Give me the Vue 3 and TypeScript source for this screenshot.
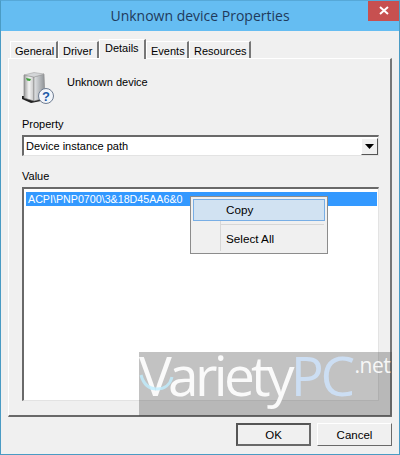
<template>
    <div class="dialog">
        <div class="title-bar">
            <span class="title">Unknown device Properties</span>
            <div class="close-btn">
                <svg width="10" height="9" viewBox="0 0 10 9">
                    <path d="M1 1 L9 8 M9 1 L1 8" stroke="#fff" stroke-width="2" fill="none" />
                </svg>
            </div>
        </div>
        <div class="content">
            <div class="tabs">
                <div
                    v-for="tab in tabs"
                    :key="tab.name"
                    class="tab"
                    :class="{ active: tab.name === activeTab }"
                    :style="{ width: tab.width + 'px' }"
                >
                    {{ tab.name }}
                </div>
            </div>
            <div class="panel">
                <div class="device-row">
                    <svg class="device-icon" width="33" height="32" viewBox="0 0 33 32">
                        <defs>
                            <linearGradient id="front" x1="0" x2="1" y1="0" y2="0">
                                <stop offset="0" stop-color="#9a9a9a" />
                                <stop offset="0.5" stop-color="#f4f4f4" />
                                <stop offset="1" stop-color="#c4c4c4" />
                            </linearGradient>
                            <linearGradient id="side" x1="0" x2="1" y1="0" y2="0">
                                <stop offset="0" stop-color="#e2e4e6" />
                                <stop offset="1" stop-color="#8c9094" />
                            </linearGradient>
                        </defs>
                        <path d="M0 27 L9 31 L24 28 L24 24 L0 24 Z" fill="#222" />
                        <path d="M2 3 L12 5 L12 29 L2 26 Z" fill="url(#front)" stroke="#777" stroke-width="0.6" />
                        <path d="M12 5 L22 2 L23 26 L12 29 Z" fill="url(#side)" stroke="#888" stroke-width="0.6" />
                        <path d="M2 3 L12 0.5 L22 2 L12 5 Z" fill="#d4d6d8" stroke="#999" stroke-width="0.5" />
                        <path d="M4 6 L9 7 L8 9 L5 8.5 Z" fill="#3fa03c" />
                        <circle cx="24" cy="24" r="7.5" fill="#f2f5fa" stroke="#6f7d92" />
                        <text x="24" y="28.5" class="help-mark">?</text>
                    </svg>
                    <span class="device-name">Unknown device</span>
                </div>

                <div class="field-label">Property</div>
                <div class="combo">
                    <span class="combo-text">Device instance path</span>
                    <div class="combo-btn">
                        <svg width="9" height="5" viewBox="0 0 9 5"><path d="M0 0 H9 L4.5 5 Z" fill="#000" /></svg>
                    </div>
                </div>

                <div class="field-label">Value</div>
                <div class="listbox">
                    <div class="list-row">ACPI\PNP0700\3&amp;18D45AA6&amp;0</div>
                </div>

                <div class="context-menu">
                    <div class="menu-gutter"></div>
                    <div class="menu-item highlighted">Copy</div>
                    <div class="menu-sep"></div>
                    <div class="menu-item">Select All</div>
                </div>
            </div>
            <div class="footer">
                <button class="btn default">OK</button>
                <button class="btn">Cancel</button>
            </div>
        </div>

        <div class="watermark">
            <svg class="wm-swoosh" width="36" height="24" viewBox="0 0 36 24">
                <path d="M2 3 C5 14 12 17 18 17 C25 17 31 13 33 5" stroke="#bfeeff" stroke-width="3" fill="none" opacity="0.8" />
            </svg>
            <span class="wm-variety">Variety</span><span class="wm-pc">PC</span><span class="wm-net">.net</span>
        </div>
    </div>
</template>

<script setup lang="ts">
const tabs = [
    { name: "General", width: 48 },
    { name: "Driver", width: 41 },
    { name: "Details", width: 47 },
    { name: "Events", width: 43 },
    { name: "Resources", width: 62 },
];
const activeTab = "Details";
</script>

<style>
html,
body {
    margin: 0;
    background: #f0f0f0;
}
</style>

<style scoped>
.dialog {
    position: relative;
    width: 400px;
    height: 455px;
    box-sizing: border-box;
    border: 1px solid #4a9bc4;
    border-top-color: #56a8d8;
    background: #f0f0f0;
    font-family: "Liberation Sans", Arial, sans-serif;
    font-size: 11px;
    color: #000;
    overflow: hidden;
}

.title-bar {
    position: relative;
    height: 30px;
    background: #65bdf2;
    display: flex;
    align-items: center;
    justify-content: center;
    padding-bottom: 1px;
    box-sizing: border-box;
}

.title {
    font-family: "Open Sans", "Noto Sans", sans-serif;
    font-size: 14px;
    color: #1f3a5c;
}

.close-btn {
    position: absolute;
    top: -1px;
    right: 0;
    width: 31px;
    height: 21px;
    background: #c75050;
    display: flex;
    align-items: center;
    justify-content: center;
}

.content {
    padding: 8px 7px 0;
}

.tabs {
    display: flex;
    height: 19px;
    padding-left: 2px;
    align-items: flex-end;
    position: relative;
    z-index: 1;
}

.tab {
    height: 17px;
    box-sizing: border-box;
    padding: 2px 0 0 4px;
    background: #f0f0f0;
    border-top: 1px solid #fff;
    border-left: 1px solid #fff;
    border-right: 2px solid #777;
    white-space: nowrap;
    line-height: 14px;
}

.tab.active {
    height: 20px;
    margin: 0 0 -1px;
    padding: 1px 0 0 5px;
}

.panel {
    position: relative;
    height: 359px;
    box-sizing: border-box;
    background: #f0f0f0;
    border-top: 1px solid #fff;
    border-left: 1px solid #fff;
    border-right: 2px solid #777;
    border-bottom: 2px solid #696969;
    padding: 13px 14px 0 13px;
}

.device-row {
    display: flex;
    gap: 12px;
    height: 32px;
}

.device-icon {
    flex-shrink: 0;
}

.help-mark {
    font-family: "Liberation Sans", sans-serif;
    font-size: 13px;
    font-weight: 700;
    fill: #1d5aa8;
    text-anchor: middle;
}

.device-name {
    margin-top: 3px;
    line-height: 14px;
}

.field-label {
    margin-top: 13px;
    line-height: 14px;
}

.combo {
    margin-top: 4px;
    height: 21px;
    box-sizing: border-box;
    width: 357px;
    background: #fff;
    border-top: 2px solid #696969;
    border-left: 2px solid #696969;
    border-right: 1px solid #e3e3e3;
    border-bottom: 1px solid #e3e3e3;
    display: flex;
    align-items: center;
    justify-content: space-between;
    padding-left: 2px;
}

.combo-btn {
    width: 17px;
    height: 17px;
    box-sizing: border-box;
    background: #f0f0f0;
    border-right: 1px solid #555;
    border-bottom: 1px solid #555;
    border-top: 1px solid #fff;
    border-left: 1px solid #fff;
    display: flex;
    align-items: center;
    justify-content: center;
}

.listbox {
    margin-top: 4px;
    width: 357px;
    height: 214px;
    box-sizing: border-box;
    background: #fff;
    border-top: 2px solid #696969;
    border-left: 2px solid #696969;
    border-right: 1px solid #e3e3e3;
    border-bottom: 1px solid #e3e3e3;
    padding: 3px 1px 0 2px;
}

.list-row {
    height: 14px;
    line-height: 14px;
    font-size: 10.7px;
    background: #3399ff;
    color: #fff;
    padding-left: 2px;
}

.context-menu {
    position: absolute;
    left: 181px;
    top: 137px;
    width: 138px;
    height: 58px;
    box-sizing: border-box;
    background: #f0f0f0;
    border: 1px solid #8c8c8c;
    padding: 2px;
    font-size: 11.7px;
}

.menu-gutter {
    position: absolute;
    left: 29px;
    top: 2px;
    bottom: 2px;
    width: 1px;
    background: #d7d7d7;
}

.menu-item {
    position: relative;
    height: 22px;
    box-sizing: border-box;
    line-height: 20px;
    padding-left: 32px;
    border: 1px solid transparent;
}

.menu-item.highlighted {
    background: #d1e2f2;
    border-color: #78aee5;
}

.menu-sep {
    position: relative;
    height: 1px;
    margin: 3px 1px 3px 28px;
    background: #d7d7d7;
}

.footer {
    display: flex;
    justify-content: flex-end;
    gap: 6px;
    padding: 6px 0 0;
}

.btn {
    width: 75px;
    height: 23px;
    box-sizing: border-box;
    padding: 0;
    font: inherit;
    font-size: 11.5px;
    color: #000;
    background: #f0f0f0;
    border: 1px solid;
    border-color: #fff #696969 #696969 #fff;
}

.btn.default {
    border: 2px solid #696969;
    border-top-color: #555;
    border-left-color: #555;
}

.watermark {
    position: absolute;
    left: 138px;
    top: 351px;
    width: 253px;
    height: 64px;
    box-sizing: border-box;
    background: rgba(70, 70, 70, 0.33);
    font-family: "Open Sans", "Noto Sans", sans-serif;
    line-height: 46px;
    white-space: nowrap;
    overflow: visible;
    pointer-events: none;
}

.wm-swoosh {
    position: absolute;
    left: 0;
    top: 20px;
}

.wm-variety {
    font-size: 55px;
    color: rgba(255, 255, 255, 0.92);
    letter-spacing: -3.7px;
}

.wm-pc {
    font-size: 55px;
    color: rgba(205, 225, 248, 0.9);
    letter-spacing: -3.5px;
}

.wm-net {
    position: relative;
    top: -23px;
    margin-left: 3px;
    font-size: 21px;
    color: rgba(255, 255, 255, 0.9);
    letter-spacing: -0.5px;
}
</style>
